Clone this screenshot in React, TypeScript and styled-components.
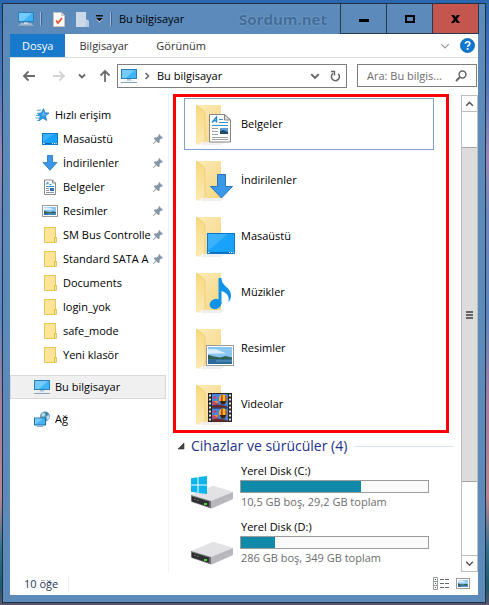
import React from 'react';
import styled, { createGlobalStyle, css } from 'styled-components';

const Global = createGlobalStyle`
  * { box-sizing: border-box; }
  body { margin: 0; }
  body, button, input {
    font-family: "Open Sans", "Noto Sans", sans-serif;
    font-size: 11px;
    line-height: 16px;
    color: #000;
  }
  button, input { border: 0; padding: 0; margin: 0; background: none; border-radius: 0; }
  svg { display: block; flex: none; }
`;

/* ---------- layout ---------- */

const Desktop = styled.div`
  min-height: 100vh;
  display: flex;
  padding: 3px 3px 2px 2px;
  background: linear-gradient(180deg, #2867b0 0%, #4f78bb 14%, #9a88b8 26%, #6d86bd 36%, #5c86c0 52%, #a37fa0 66%, #b98690 82%, #2f6f8c 91%, #1f5a68 97%, #5a5270 100%);
`;

const Window = styled.main`
  flex: 1;
  min-width: 0;
  display: flex;
  flex-direction: column;
  border: 1px solid #22303f;
  background: #5b8abb;
  padding: 0 7px 7px;
`;

const TitleBar = styled.header`
  display: flex;
  align-items: center;
  height: 30px;
  padding-left: 8px;
  margin-right: -1px;
`;

const QuickAccess = styled.div`
  display: flex;
  align-items: center;
  margin-left: 6px;
`;

const QuickButton = styled.button<{ $width: number }>`
  display: flex;
  align-items: center;
  justify-content: center;
  width: ${(p) => p.$width}px;
  height: 20px;
`;

const Divider = styled.span`
  width: 2px;
  height: 14px;
  border-left: 1px solid #9dbcdb;
  border-right: 1px solid #41678e;
`;

const Title = styled.h1`
  margin: 0 0 0 7px;
  font-size: 11px;
  font-weight: 400;
  white-space: nowrap;
`;

const Watermark = styled.span`
  margin-left: auto;
  margin-right: 13px;
  font-size: 15px;
  line-height: 20px;
  font-weight: 700;
  color: #426c97;
  text-shadow: 0 0 2px #86abd0;
`;

const WindowControls = styled.div`
  display: flex;
  align-self: stretch;
  border-right: 1px solid #263a4f;
`;

const ControlButton = styled.button<{ $close?: boolean }>`
  display: flex;
  align-items: center;
  justify-content: center;
  width: 46px;
  border-left: 1px solid #263a4f;
  border-bottom: 1px solid #263a4f;
  background: ${(p) => (p.$close ? '#c4564e' : 'transparent')};
`;

const Content = styled.div`
  flex: 1;
  display: flex;
  flex-direction: column;
  background: #fff;
`;

const Ribbon = styled.nav`
  display: flex;
  align-items: stretch;
  height: 24px;
  border-bottom: 1px solid #dadbdc;
`;

const Tab = styled.button<{ $primary?: boolean }>`
  padding: 0 14px;
  color: #333;
  ${(p) =>
    p.$primary &&
    css`
      padding: 0 12px;
      background: #1979ca;
      color: #fff;
    `}
`;

const RibbonTools = styled.div`
  margin-left: auto;
  margin-right: 3px;
  display: flex;
  align-items: center;
  gap: 10px;
`;

const IconButton = styled.button`
  display: flex;
  align-items: center;
  justify-content: center;
`;

const NavigationBar = styled.div`
  display: grid;
  grid-template-columns: 95px 230fr 130fr;
  padding: 6px 1px 6px 12px;
`;

const Arrows = styled.div`
  display: grid;
  grid-template-columns: 21px 14px 14px 14px;
  justify-items: start;
  align-items: center;
  column-gap: 9px;

  ${IconButton} { width: 14px; }
`;

const AddressBar = styled.div`
  min-width: 0;
  display: flex;
  align-items: center;
  height: 24px;
  border: 1px solid #7c7f82;
  padding: 0 5px 0 3px;
`;

const Crumb = styled.button`
  display: flex;
  align-items: center;
  gap: 6px;
  white-space: nowrap;
`;

const AddressTools = styled.div`
  margin-left: auto;
  display: flex;
  align-items: center;
  gap: 10px;
`;

const SearchBox = styled.label`
  min-width: 0;
  margin-left: 10px;
  display: flex;
  align-items: center;
  height: 23px;
  border: 1px solid #7c7f82;
  padding: 0 9px;
`;

const SearchInput = styled.input`
  flex: 1;
  min-width: 0;
  outline: none;
  &::placeholder { color: #6d6d6d; opacity: 1; }
`;

const Body = styled.div`
  flex: 1;
  display: flex;
`;

const Sidebar = styled.nav`
  flex: none;
  width: 159px;
  padding-top: 9px;
  border-right: 1px solid #f3f3f3;
`;

const NavList = styled.ul`
  list-style: none;
  margin: 0 0 8px;
  padding: 0;
`;

const NavRow = styled.button<{ $level: number; $selected?: boolean }>`
  display: flex;
  align-items: center;
  width: 156px;
  height: 24px;
  padding-left: ${(p) => (p.$level === 1 ? 23 : 31)}px;
  padding-right: 2px;
  border: 1px solid ${(p) => (p.$selected ? '#d9d9d9' : 'transparent')};
  background: ${(p) => (p.$selected ? '#f0f0f0' : 'transparent')};
`;

const NavLabel = styled.span`
  flex: 1;
  min-width: 0;
  margin: 0 1px 0 5px;
  overflow: hidden;
  white-space: nowrap;
  text-align: left;
`;

const Files = styled.section`
  flex: 1;
  min-width: 0;
  padding-left: 4px;
`;

const FolderGroup = styled.div`
  display: grid;
  gap: 4px;
  margin-right: 12px;
  border: 3px solid #fb0007;
  padding: 1px 12px 0 8px;
`;

const Tile = styled.button<{ $focused?: boolean }>`
  display: flex;
  align-items: center;
  gap: 3px;
  height: 52px;
  padding-left: 5px;
  border: 1px solid ${(p) => (p.$focused ? '#7da2ce' : 'transparent')};
  text-align: left;
`;

const GroupHeader = styled.h2`
  display: flex;
  align-items: center;
  height: 26px;
  margin: 0 7px 0 4px;
  font-size: 14px;
  line-height: 20px;
  font-weight: 400;
  color: #1e3287;
  white-space: nowrap;
  &::after {
    content: '';
    flex: 1;
    height: 1px;
    margin-left: 7px;
    background: #d6e5f5;
  }
`;

const GroupToggle = styled.button`
  margin-right: 6px;
`;

const Drives = styled.div`
  display: grid;
  gap: 8px;
  padding: 4px 32px 4px 17px;
`;

const Drive = styled.article`
  display: flex;
  gap: 2px;
  height: 48px;
`;

const DriveInfo = styled.div`
  flex: 1;
  min-width: 0;
`;

const DriveText = styled.div<{ $muted?: boolean }>`
  padding-left: 1px;
  white-space: nowrap;
  color: ${(p) => (p.$muted ? '#6d6d6d' : '#000')};
`;

const Meter = styled.div`
  height: 13px;
  margin: 1px 0;
  border: 1px solid #9c9c9c;
  background: #fafafa;
`;

const MeterFill = styled.div`
  height: 100%;
  background: #1189a8;
`;

const Scrollbar = styled.div`
  flex: none;
  width: 17px;
  margin-top: 1px;
  display: flex;
  flex-direction: column;
  border: 1px solid #bdbdbd;
`;

const ScrollButton = styled.button<{ $down?: boolean }>`
  display: flex;
  align-items: center;
  justify-content: center;
  height: 16px;
  border-bottom: ${(p) => (p.$down ? '0' : '1px solid #bdbdbd')};
  border-top: ${(p) => (p.$down ? '1px solid #bdbdbd' : '0')};
`;

const ScrollGap = styled.div<{ $share: number }>`
  flex: ${(p) => p.$share} 1 0;
`;

const ScrollThumb = styled.div`
  flex: 335 1 0;
  display: flex;
  flex-direction: column;
  justify-content: center;
  gap: 1px;
  padding: 0 4px;
  background: #dcdcdc;
  border-top: 1px solid #a6a6a6;
  border-bottom: 1px solid #a6a6a6;
`;

const Grip = styled.span`
  height: 2px;
  background: #666;
`;

const StatusBar = styled.footer`
  display: flex;
  align-items: center;
  height: 23px;
  padding: 0 8px 0 14px;
  color: #1e395b;
`;

const Count = styled.span`
  padding-right: 10px;
  border-right: 1px solid #eee;
`;

const ViewModes = styled.div`
  margin-left: auto;
  display: flex;
  align-items: center;
  gap: 7px;
`;

/* ---------- icons ---------- */

const PcIcon = () => (
  <svg width="16" height="16" viewBox="0 0 16 16">
    <rect x="0" y="1" width="16" height="10" fill="#2a7fb8" />
    <rect x="1" y="2" width="14" height="8" fill="#3fb3f7" />
    <path d="M1 10V2h13L5 10z" fill="#74cbfb" />
    <path d="M6 11h4v2H6z" fill="#a9c3d6" />
    <path d="M3 12.500h10l2 1H1z" fill="#dfe8ee" />
    <path d="M0 14h16v1H0z" fill="#8ca6b8" />
  </svg>
);

const DocCheckIcon = () => (
  <svg width="12" height="15" viewBox="0 0 12 15">
    <path d="M.5 .5h8l3 3v11H.5z" fill="#fbfbfb" stroke="#c9c2bf" />
    <path d="M8.500 .5v3h3" fill="#ddd" stroke="#c9c2bf" />
    <path d="M3 8.500l2 2.500 4-5" fill="none" stroke="#e4572a" strokeWidth="1.800" />
  </svg>
);

const DocBlankIcon = () => (
  <svg width="13" height="15" viewBox="0 0 13 15">
    <path d="M0 0h10v7l3 2v6H0z" fill="#cbd9e8" />
    <path d="M10 8l3 2v5H9z" fill="#b5cbe2" />
  </svg>
);

const DropIcon = () => (
  <svg width="7" height="8" viewBox="0 0 7 8">
    <path d="M0 2h7L3.500 6z" fill="#fff" transform="translate(0 1.500)" />
    <path d="M0 0h7v1.500H0zM0 3h7L3.500 6.500z" fill="#111" />
  </svg>
);

const MinimizeIcon = () => (
  <svg width="10" height="11" viewBox="0 0 10 11"><path d="M0 6h10v3H0z" fill="#000" /></svg>
);

const MaximizeIcon = () => (
  <svg width="10" height="8" viewBox="0 0 10 8"><path d="M0 0h10v8H0zM2 2v4h6V2z" fill="#000" fillRule="evenodd" /></svg>
);

const CloseIcon = () => (
  <svg width="9" height="8" viewBox="0 0 9 8"><path d="M0 0h3l1.500 2L6 0h3L6 4l3 4H6L4.500 6 3 8H0l3-4z" fill="#000" /></svg>
);

const Chevron = ({ dir, color = '#666', w = 1.6, size = 8 }: { dir: 'up' | 'down' | 'right'; color?: string; w?: number; size?: number }) => {
  const d = { up: 'M1 6l3-3 3 3', down: 'M1 2.500l3 3 3-3', right: 'M2.500 1l3 3-3 3' }[dir];
  return (
    <svg width={size} height={size} viewBox="0 0 8 8">
      <path d={d} fill="none" stroke={color} strokeWidth={w} />
    </svg>
  );
};

const HelpIcon = () => (
  <svg width="15" height="15" viewBox="0 0 15 15">
    <circle cx="7.500" cy="7.500" r="7" fill="#0b78d4" stroke="#075a9f" strokeWidth=".8" />
    <path d="M5.300 5.800C5.300 3 9.800 3.200 9.800 5.700 9.800 7.300 7.600 7.200 7.600 9" fill="none" stroke="#fff" strokeWidth="1.600" />
    <rect x="6.700" y="10" width="1.800" height="1.800" fill="#fff" />
  </svg>
);

const ArrowIcon = ({ turn, color }: { turn: number; color: string }) => (
  <svg width="14" height="14" viewBox="0 0 14 14">
    <path d="M13 7H2M6.500 2.500L2 7l4.500 4.500" transform={`rotate(${turn} 7 7)`} fill="none" stroke={color} strokeWidth="1.800" />
  </svg>
);

const RefreshIcon = () => (
  <svg width="11" height="12" viewBox="0 0 11 12">
    <path d="M8.200 3.800A4 4 0 1 1 3.200 3.300" fill="none" stroke="#666" strokeWidth="1.500" />
    <path d="M1 1.500h3.500v4" fill="none" stroke="#666" strokeWidth="1.400" />
  </svg>
);

const SearchIcon = () => (
  <svg width="12" height="12" viewBox="0 0 12 12">
    <circle cx="7.500" cy="4.500" r="3.400" fill="none" stroke="#666" strokeWidth="1.500" />
    <path d="M5 7L1 11" stroke="#666" strokeWidth="1.900" />
  </svg>
);

const StarIcon = () => (
  <svg width="16" height="16" viewBox="0 0 16 16">
    <path d="M9.500 1.500l1.300 4.300 4.200.2-3.400 2.800 1 4.700-3.700-2.300L5 13.800l1-4.600-2.700-2.800 4 -.5z" fill="#2e9be6" stroke="#1b78bf" strokeWidth=".7" />
    <path d="M3 3.500l4-.5M2 8.500h3M1.500 11h3.500M3 13.500h2" stroke="#49a9e8" strokeWidth="1.200" />
    <path d="M9.500 4l.8 3 2.500.1L8 9z" fill="#6cc2fa" />
  </svg>
);

const DesktopShape = ({ w, h }: { w: number; h: number }) => (
  <>
    <rect width={w} height={h} fill="#0a7ad0" />
    <rect x="1" y="1" width={w - 2} height={h - 2} fill="#18a2fb" />
    <path d={`M1 ${h - 3}V1h${w * 0.7}z`} fill="#3cb2fc" />
    <path d={`M1 ${h - 1.5}h${w - 2}`} stroke="#0b6cb5" />
    <path d={`M1 ${h - 1.5}h1.500M${w - 6} ${h - 1.5}h1M${w - 4} ${h - 1.5}h1M${w - 2.300} ${h - 1.5}h1`} stroke="#fff" />
  </>
);

const DesktopIcon = () => (
  <svg width="16" height="16" viewBox="0 0 16 16"><g transform="translate(0 2)"><DesktopShape w={16} h={12} /></g></svg>
);

const DownArrowIcon = () => (
  <svg width="16" height="16" viewBox="0 0 16 16">
    <path d="M5.500 .5h5v7h4.500L8 15.300 1 7.500h4.500z" fill="#3b98e8" stroke="#2576bd" strokeWidth=".8" />
  </svg>
);

const DocumentShape = () => (
  <>
    <path d="M.5 .5h15l6 5.500v22H.5z" fill="#fdfdfd" stroke="#858585" />
    <path d="M15.500 .5V6h6z" fill="#e0e0e0" stroke="#858585" />
    <path d="M3 8.500L7.500 3v5.500M4.500 6.800H7.500" fill="none" stroke="#1c86cc" strokeWidth="1.300" />
    <path d="M10 5.500h4M10 8.500h9M3 11.500h16" stroke="#3a93cf" />
    <path d="M3 14.500h6M3 17.500h6M3 20.500h6M3 23.500h16M3 25.500h16" stroke="#a2a2a2" />
    <rect x="11" y="14" width="8" height="6" fill="#5b9bd8" />
    <path d="M11 20v-3l3-1 5 2v2z" fill="#1e4c66" />
  </>
);

const DocumentIcon = () => (
  <svg width="16" height="16" viewBox="0 0 16 16">
    <path d="M2.500 1h8l3 3v11.500h-11z" fill="#fff" stroke="#8b8b8b" />
    <path d="M10.500 1v3h3" fill="none" stroke="#8b8b8b" />
    <path d="M4 5.500L6 3v2.500M4 7.500h8M7.500 5.500h2" fill="none" stroke="#2a8fd0" />
    <path d="M4 9.500h3M4 11.500h3M4 13.500h8" stroke="#8797a5" />
    <path d="M8 9h4v3H8z" fill="#2d71b8" />
  </svg>
);

const PictureShape = ({ w, h }: { w: number; h: number }) => (
  <>
    <rect x=".5" y=".5" width={w - 1} height={h - 1} fill="#fff" stroke="#9b9b9b" />
    <rect x="2" y="2" width={w - 4} height={h - 4} fill="#8ac6f4" />
    <path d={`M2 ${h * 0.2}h${w * 0.3}l${w * 0.35} ${h * 0.2}L2 ${h * 0.42}z`} fill="#dceefb" />
    <path d={`M2 ${h * 0.46}L${w * 0.25} ${h * 0.54}L${w * 0.5} ${h * 0.6}L${w * 0.7} ${h * 0.52}L${w - 2} ${h * 0.6}V${h * 0.7}H2z`} fill="#2f6250" />
    <path d={`M2 ${h * 0.68}H${w - 2}V${h - 2}H2z`} fill="#2c6a9c" />
    <path d={`M${w * 0.35} ${h * 0.76}H${w - 2}`} stroke="#5e9cc8" />
  </>
);

const PictureIcon = () => (
  <svg width="16" height="16" viewBox="0 0 16 16"><g transform="translate(0 2)"><PictureShape w={16} h={12} /></g></svg>
);

const FolderIcon = () => (
  <svg width="16" height="16" viewBox="0 0 16 16">
    <path d="M2.500 .5h11v10h1v5h-12z" fill="#fde496" stroke="#e9c658" />
    <path d="M12.500 15v-4.500h2" fill="none" stroke="#e2b93f" />
  </svg>
);

const NetworkIcon = () => (
  <svg width="16" height="16" viewBox="0 0 16 16">
    <circle cx="11" cy="5.500" r="5" fill="#5e9cb8" />
    <path d="M8 2.500c2-1 3 0 3 1.500S8.500 6 7.500 5zM12 6l3-2 .8 2.500L14 9.500z" fill="#b9dbe8" />
    <path d="M11.500 1l2.500 1.500-1.500 2z" fill="#346f8d" />
    <path d="M0 6.500h12v8H0z" fill="#1d71a8" />
    <path d="M1 7.500h10v6H1z" fill="#45b4f5" />
    <path d="M1 13.500v-6h8z" fill="#7bcbfa" />
    <path d="M3 15.500h6" stroke="#8fa9ba" />
  </svg>
);

const PinIcon = () => (
  <svg width="10" height="10" viewBox="0 0 10 10">
    <path d="M6 0l4 4-1 .8-.8-.3L6.500 6.300l.2 2-1.200 1L3.300 7.200 .5 10 0 9.500l2.700-2.900L.8 4.500l1-1.200 2 .2 1.900-1.700-.4-1z" fill="#8796a5" />
  </svg>
);

const LibraryIcon = ({ children }: { children: React.ReactNode }) => (
  <svg width="48" height="48" viewBox="0 0 48 48">
    <defs>
      <linearGradient id="back" x1="0" y1="0" x2="1" y2="1">
        <stop offset="0" stopColor="#fcecbb" />
        <stop offset="1" stopColor="#f5d680" />
      </linearGradient>
      <linearGradient id="flap" x1="0" y1="0" x2="0" y2="1">
        <stop offset="0" stopColor="#f8d880" />
        <stop offset="1" stopColor="#fdeab4" />
      </linearGradient>
    </defs>
    <path d="M13 42h22l-4 3H11z" fill="#efefef" />
    <path d="M6 5h24q1 0 1 1v36H10z" fill="url(#back)" />
    <path d="M6 5l7.500 5.500q1.500 1 1.500 3V38q0 1.500-1 2.500L9 45 6 44z" fill="url(#flap)" />
    <path d="M6 5l7.500 5.500q1.500 1 1.500 3V38q0 1.500-1 2.500" fill="none" stroke="#ecc667" strokeWidth=".7" />
    {children}
  </svg>
);

const Balloon = () => (
  <>
    <ellipse cx="11" cy="5" rx="4" ry="4.500" fill="#f3c11f" />
    <path d="M9.500 .8q-1.500 4 0 8h1.200V.5zM13 1.200q1 3.500-.2 7.300l1.200-1q2-3 0-5.500z" fill="#c33a1e" />
    <path d="M7.500 7h7l-2 3.500h-3z" fill="#3a2410" />
    <path d="M0 3.500l3-1.500 2 1.500L3 5zM0 8q2.500-2 6 0l-1 3H1z" fill="#c2476a" />
    <path d="M2 7.500q2-1.500 4 0l-1 1.500z" fill="#eaa21c" />
    <path d="M0 11.500l6-1 9 1.500v1.500H0z" fill="#6a2a28" />
  </>
);

const overlays: Record<string, React.ReactNode> = {
  doc: <g transform="translate(19 14)"><DocumentShape /></g>,
  down: <path d="M27.500 18.500h8v12h7L31.500 42 20.500 30.500h7z" fill="#3b98e8" stroke="#2576bd" />,
  desktop: <g transform="translate(17 21)"><DesktopShape w={28} h={21} /></g>,
  music: (
    <g fill="#0f93ea">
      <ellipse cx="25.500" cy="36" rx="6" ry="5" transform="rotate(-20 25.500 36)" />
      <path d="M28.500 10h3c0 5 3 7 6 10 4 4 5 9 1 14.500 1-6-1-9.500-7-11.500v13h-3z" />
    </g>
  ),
  picture: <g transform="translate(16 21)"><PictureShape w={28} h={21} /></g>,
  video: (
    <g transform="translate(18 13)">
      <rect width="24" height="29" fill="#262626" />
      <rect x="4" y="1" width="16" height="27" fill="#4a84dc" />
      <g transform="translate(4 1)"><Balloon /></g>
      <path d="M4 15h16" stroke="#222" strokeWidth="1" />
      <g transform="translate(4 15)"><Balloon /></g>
      <path d="M2 1.500v27M22 1.500v27" stroke="#e8e8e8" strokeWidth="2" strokeDasharray="2 2" />
    </g>
  ),
};

const DriveIcon = ({ system }: { system?: boolean }) => (
  <svg width="48" height="48" viewBox="0 0 48 48">
    <path d="M1 32L22 23.200q1.500-.5 3 0L43 29 21 38z" fill="#e2e2e4" />
    <path d="M1 32l20 6v7.500L2 39q-1-.5-1-1.500z" fill="#6d6e72" />
    <path d="M43 29v6q0 1-1 1.500L23 45q-1 .5-2 .3V38z" fill="#b9b9bd" />
    <path d="M2 33.500l17 5v5.300L2 38.500z" fill="#2e2f33" />
    <path d="M4 36l1.500.5M7 37l1.500.5" stroke="#777" />
    <rect x="14" y="40" width="3" height="2" fill="#4cd63a" />
    {system && <path d="M1 15.200l6.500-1v7.300H1zM8.500 14l8.500-1v8.500H8.500zM1 22.500h6.500v7.300l-6.500-1zM8.500 22.500H17V31l-8.500-1z" fill="#0bb6ee" />}
  </svg>
);

const TriangleIcon = () => (
  <svg width="8" height="8" viewBox="0 0 8 8"><path d="M7 1v6H1z" fill="#444" stroke="#333" strokeWidth=".6" /></svg>
);

const DetailsIcon = () => (
  <svg width="16" height="13" viewBox="0 0 16 13">
    <path d="M.5 .5h4v12h-4zM.5 4.500h4M.5 8.500h4" fill="#fff" stroke="#9a9a9a" />
    <path d="M7 2.500h4M12 2.500h4M7 6.500h4M12 6.500h4M7 10.500h4M12 10.500h4" stroke="#666" />
    <path d="M2 2.500h1" stroke="#333" /><path d="M2 6.500h1" stroke="#27c" /><path d="M2 10.500h1" stroke="#d33" />
  </svg>
);

const ThumbsIcon = () => (
  <svg width="14" height="11" viewBox="0 0 14 11"><PictureShape w={14} h={11} /></svg>
);

/* ---------- data ---------- */

const quickItems = [
  { name: 'Masaüstü', icon: <DesktopIcon />, pinned: true },
  { name: 'İndirilenler', icon: <DownArrowIcon />, pinned: true },
  { name: 'Belgeler', icon: <DocumentIcon />, pinned: true },
  { name: 'Resimler', icon: <PictureIcon />, pinned: true },
  { name: 'SM Bus Controlle', icon: <FolderIcon />, pinned: true },
  { name: 'Standard SATA A', icon: <FolderIcon />, pinned: true },
  { name: 'Documents', icon: <FolderIcon /> },
  { name: 'login_yok', icon: <FolderIcon /> },
  { name: 'safe_mode', icon: <FolderIcon /> },
  { name: 'Yeni klasör', icon: <FolderIcon /> },
];

const folders = [
  { name: 'Belgeler', overlay: 'doc', focused: true },
  { name: 'İndirilenler', overlay: 'down' },
  { name: 'Masaüstü', overlay: 'desktop' },
  { name: 'Müzikler', overlay: 'music' },
  { name: 'Resimler', overlay: 'picture' },
  { name: 'Videolar', overlay: 'video' },
];

const drives = [
  { name: 'Yerel Disk (C:)', detail: '10,5 GB boş, 29,2 GB toplam', used: 64, system: true },
  { name: 'Yerel Disk (D:)', detail: '286 GB boş, 349 GB toplam', used: 18 },
];

/* ---------- page ---------- */

export default function App() {
  return (
    <>
      <Global />
      <Desktop>
        <Window>
          <TitleBar>
            <QuickButton $width={16} aria-label="Sistem menüsü"><PcIcon /></QuickButton>
            <QuickAccess>
              <Divider />
              <QuickButton $width={34} aria-label="Özellikler"><DocCheckIcon /></QuickButton>
              <QuickButton $width={12} aria-label="Yeni klasör"><DocBlankIcon /></QuickButton>
              <QuickButton $width={22} aria-label="Özelleştir"><DropIcon /></QuickButton>
              <Divider />
            </QuickAccess>
            <Title>Bu bilgisayar</Title>
            <Watermark>Sordum.net</Watermark>
            <WindowControls>
              <ControlButton aria-label="Küçült"><MinimizeIcon /></ControlButton>
              <ControlButton aria-label="Ekranı kapla"><MaximizeIcon /></ControlButton>
              <ControlButton $close aria-label="Kapat"><CloseIcon /></ControlButton>
            </WindowControls>
          </TitleBar>

          <Content>
            <Ribbon>
              <Tab $primary>Dosya</Tab>
              <Tab>Bilgisayar</Tab>
              <Tab>Görünüm</Tab>
              <RibbonTools>
                <IconButton aria-label="Şeridi genişlet"><Chevron dir="down" color="#999" w={1} size={10} /></IconButton>
                <IconButton aria-label="Yardım"><HelpIcon /></IconButton>
              </RibbonTools>
            </Ribbon>

            <NavigationBar>
              <Arrows>
                <IconButton aria-label="Geri"><ArrowIcon turn={0} color="#6b6b6b" /></IconButton>
                <IconButton aria-label="İleri"><ArrowIcon turn={180} color="#d4d4d4" /></IconButton>
                <IconButton aria-label="Son konumlar"><Chevron dir="down" w={1.8} /></IconButton>
                <IconButton aria-label="Yukarı"><ArrowIcon turn={90} color="#6b6b6b" /></IconButton>
              </Arrows>
              <AddressBar>
                <Crumb><PcIcon /><Chevron dir="right" w={1.5} />Bu bilgisayar</Crumb>
                <AddressTools>
                  <IconButton aria-label="Önceki konumlar"><Chevron dir="down" w={1.6} size={10} /></IconButton>
                  <IconButton aria-label="Yenile"><RefreshIcon /></IconButton>
                </AddressTools>
              </AddressBar>
              <SearchBox>
                <SearchInput type="text" aria-label="Ara: Bu bilgisayar" placeholder="Ara: Bu bilgis..." />
                <SearchIcon />
              </SearchBox>
            </NavigationBar>

            <Body>
              <Sidebar>
                <NavList>
                  <li><NavRow $level={1}><StarIcon /><NavLabel>Hızlı erişim</NavLabel></NavRow></li>
                  {quickItems.map((item) => (
                    <li key={item.name}>
                      <NavRow $level={2}>
                        {item.icon}
                        <NavLabel>{item.name}</NavLabel>
                        {item.pinned && <PinIcon />}
                      </NavRow>
                    </li>
                  ))}
                </NavList>
                <NavList>
                  <li><NavRow $level={1} $selected><PcIcon /><NavLabel>Bu bilgisayar</NavLabel></NavRow></li>
                </NavList>
                <NavList>
                  <li><NavRow $level={1}><NetworkIcon /><NavLabel>Ağ</NavLabel></NavRow></li>
                </NavList>
              </Sidebar>

              <Files>
                <FolderGroup>
                  {folders.map((f) => (
                    <Tile key={f.name} $focused={f.focused}>
                      <LibraryIcon>{overlays[f.overlay]}</LibraryIcon>
                      {f.name}
                    </Tile>
                  ))}
                </FolderGroup>
                <GroupHeader>
                  <GroupToggle aria-label="Grubu daralt"><TriangleIcon /></GroupToggle>
                  Cihazlar ve sürücüler (4)
                </GroupHeader>
                <Drives>
                  {drives.map((d) => (
                    <Drive key={d.name}>
                      <DriveIcon system={d.system} />
                      <DriveInfo>
                        <DriveText>{d.name}</DriveText>
                        <Meter role="meter" aria-label={d.name} aria-valuenow={d.used} aria-valuemin={0} aria-valuemax={100}>
                          <MeterFill style={{ width: `${d.used}%` }} />
                        </Meter>
                        <DriveText $muted>{d.detail}</DriveText>
                      </DriveInfo>
                    </Drive>
                  ))}
                </Drives>
              </Files>

              <Scrollbar>
                <ScrollButton aria-label="Yukarı kaydır"><Chevron dir="up" color="#555" w={1.3} size={9} /></ScrollButton>
                <ScrollGap $share={35} />
                <ScrollThumb><Grip /><Grip /><Grip /></ScrollThumb>
                <ScrollGap $share={73} />
                <ScrollButton $down aria-label="Aşağı kaydır"><Chevron dir="down" color="#555" w={1.3} size={9} /></ScrollButton>
              </Scrollbar>
            </Body>

            <StatusBar>
              <Count>10 öğe</Count>
              <ViewModes>
                <IconButton aria-label="Ayrıntılar"><DetailsIcon /></IconButton>
                <IconButton aria-label="Büyük simgeler"><ThumbsIcon /></IconButton>
              </ViewModes>
            </StatusBar>
          </Content>
        </Window>
      </Desktop>
    </>
  );
}
